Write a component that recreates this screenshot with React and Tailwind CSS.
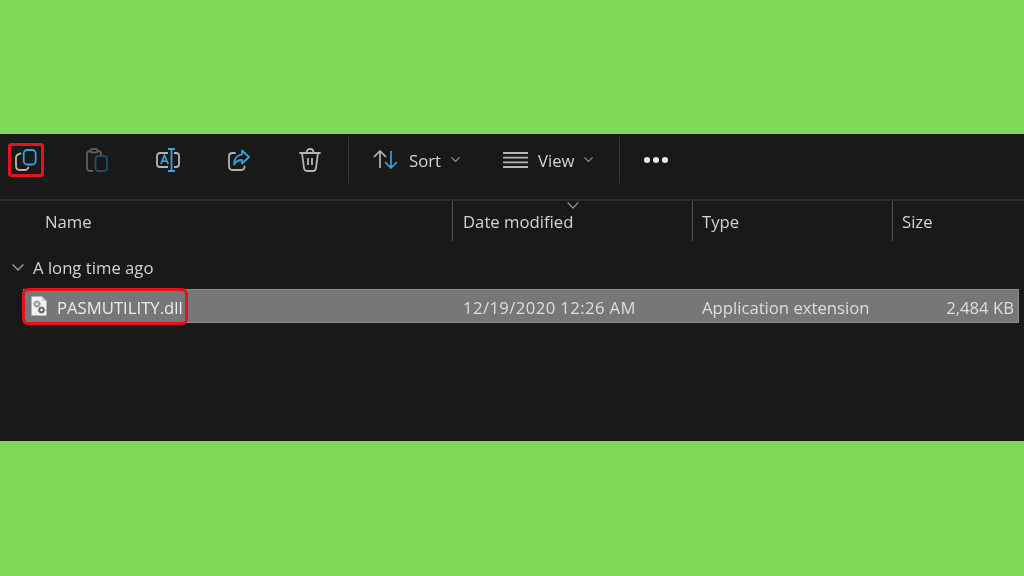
const BLUE = "#3aa0d8";
const GRAY = "#b4b4b4";

function Copy() {
  return (
    <svg width="22" height="22" viewBox="0 0 22 22" fill="none" strokeWidth="1.8">
      <path d="M5.5 4.5 C2.5 5 1 6.5 1 9 V17 C1 19.8 2.5 21 5 21 H9.5 C11.5 21 12.8 20.2 13.4 18.5" stroke={GRAY} strokeLinecap="round" />
      <rect x="8.7" y="1" width="12" height="14.5" rx="3.5" stroke={BLUE} />
    </svg>
  );
}
function Paste() {
  return (
    <svg width="22" height="24" viewBox="0 0 22 24" fill="none" strokeWidth="1.8">
      <path d="M7 23 H4 C2 23 1 21.8 1 20 V6 C1 4.2 2 3 4 3 H12 C14 3 15 4.2 15 6 V7" stroke="#5c5c5c" />
      <rect x="4.5" y="1" width="7" height="3.5" rx="1.7" stroke="#5c5c5c" fill="#191919" />
      <rect x="9.5" y="8" width="11.5" height="15" rx="3" stroke="#1f4d68" />
    </svg>
  );
}
function Rename() {
  return (
    <svg width="24" height="24" viewBox="0 0 24 24" fill="none" strokeWidth="1.8">
      <path d="M12 5 H4 C2.2 5 1 6.2 1 8 V16 C1 17.8 2.2 19 4 19 H12" stroke={GRAY} />
      <path d="M18 5 H20 C21.8 5 23 6.2 23 8 V16 C23 17.8 21.8 19 20 19 H18" stroke={GRAY} />
      <path d="M12 1 H19 M15.5 1 V23 M12 23 H19" stroke={BLUE} />
      <path d="M4.8 16 L8.5 7.5 L12.2 16 M6 13.2 H11" stroke={BLUE} />
    </svg>
  );
}
function Share() {
  return (
    <svg width="22" height="22" viewBox="0 0 22 22" fill="none" strokeWidth="1.8">
      <path d="M7 4 H4.5 C2.3 4 1 5.3 1 7.5 V17 C1 19.7 2.4 21 4.8 21 H13 C15.3 21 16.5 19.7 16.5 17.5" stroke={GRAY} strokeLinecap="round" />
      <path d="M14 1.5 L21 8 L14 14.5 V11 C10.5 11 8 12.2 6 15.5 C6 10 9 6 14 5.3 Z" stroke={BLUE} strokeLinejoin="round" />
    </svg>
  );
}
function Trash() {
  return (
    <svg width="22" height="24" viewBox="0 0 22 24" fill="none" strokeWidth="1.8" stroke={GRAY}>
      <path d="M1 5 H21" strokeLinecap="round" />
      <path d="M7.5 5 C7.5 2.5 9 1 11 1 C13 1 14.5 2.5 14.5 5" />
      <path d="M3 5 L5 20 C5.3 22 6.5 23 8 23 H14 C15.5 23 16.7 22 17 20 L19 5" />
      <path d="M9 10 V17 M13 10 V17" />
    </svg>
  );
}
function SortIcon() {
  return (
    <svg width="25" height="19" viewBox="0 0 25 19" fill="none" strokeWidth="1.7">
      <path d="M1 7 L7 1 L13 7 M7 1 V18" stroke={GRAY} />
      <path d="M12 12 L18 18 L24 12 M18 1 V18" stroke={BLUE} />
    </svg>
  );
}
function ViewIcon() {
  return (
    <svg width="25" height="16" viewBox="0 0 25 16" fill="none" strokeWidth="1.8" stroke={GRAY}>
      <path d="M0 1 H25 M0 5.7 H25 M0 10.3 H25 M0 15 H25" />
    </svg>
  );
}
function Chevron({ size = 9, color = "#9a9a9a" }) {
  return (
    <svg width={size} height={size * 0.6} viewBox="0 0 10 6" fill="none" stroke={color} strokeWidth="1.2">
      <path d="M0.5 0.5 L5 5 L9.5 0.5" />
    </svg>
  );
}
function DllIcon() {
  return (
    <svg width="16" height="20" viewBox="0 0 16 20">
      <path d="M0.5 0.5 H11 L15.5 5 V19.5 H0.5 Z" fill="#f2f2f2" />
      <path d="M11 0.5 V5 H15.5" fill="#c9c9c9" />
      <circle cx="6" cy="8" r="2.2" fill="none" stroke="#9a9a9a" strokeWidth="1.8" />
      <circle cx="6" cy="8" r="3.3" fill="none" stroke="#9a9a9a" strokeWidth="1" strokeDasharray="1.2 1.2" />
      <circle cx="10.5" cy="14" r="2.2" fill="none" stroke="#666666" strokeWidth="1.8" />
      <circle cx="10.5" cy="14" r="3.3" fill="none" stroke="#666666" strokeWidth="1" strokeDasharray="1.2 1.2" />
    </svg>
  );
}

function Tool({ w, children }) {
  return <div className="flex items-center justify-center h-full" style={{ width: w }}>{children}</div>;
}
function HeaderCell({ w, pad, children }) {
  return (
    <div className="h-full flex items-center pt-[2px] border-l border-[#555555]" style={{ width: w, paddingLeft: pad }}>
      {children}
    </div>
  );
}

export default function App() {
  return (
    <div className="w-[1024px] h-[576px] bg-[#7ed957] flex flex-col justify-center overflow-hidden" style={{ fontFamily: '"Open Sans","Noto Sans",sans-serif' }}>
      <div className="h-[307px] mt-[-2px] bg-[#191919] flex flex-col text-[#d4d4d4] text-[16.7px] blur-[0.35px]">
        <div className="relative h-[67px] shrink-0 flex items-start border-b-2 border-[#2d2d2d]">
          <div className="h-[52px] flex items-center">
            <Tool w={52}><Copy /></Tool>
            <div className="ml-[9px] flex items-center h-full">
              <Tool w={71}><Paste /></Tool>
              <Tool w={71}><Rename /></Tool>
              <Tool w={71}><Share /></Tool>
              <Tool w={71}><Trash /></Tool>
            </div>
            <div className="ml-[3px] w-px h-[46px] bg-[#333333]" />
            <div className="ml-[24px] flex items-center"><SortIcon /></div>
            <span className="ml-[11px] pt-[2px]">Sort</span>
            <div className="ml-[10px]"><Chevron /></div>
            <div className="ml-[43px]"><ViewIcon /></div>
            <span className="ml-[10px] pt-[2px]">View</span>
            <div className="ml-[10px]"><Chevron /></div>
            <div className="ml-[26px] w-px h-[46px] bg-[#333333]" />
            <div className="ml-[24px] flex gap-[3px]">
              <div className="w-[6px] h-[6px] rounded-full bg-[#eeeeee]" />
              <div className="w-[6px] h-[6px] rounded-full bg-[#eeeeee]" />
              <div className="w-[6px] h-[6px] rounded-full bg-[#eeeeee]" />
            </div>
          </div>
          <div className="absolute left-[8px] top-[9px] w-[36px] h-[34px] border-[3px] border-[#e3131e] rounded-[3px]" />
        </div>
        <div className="relative h-[40px] shrink-0 flex items-center">
          <div className="w-[452px] pl-[45px] pt-[2px]">Name</div>
          <HeaderCell w={240} pad={10}>Date modified</HeaderCell>
          <HeaderCell w={200} pad={9}>Type</HeaderCell>
          <HeaderCell w={132} pad={9}>Size</HeaderCell>
          <div className="absolute left-[567px] top-[1px]"><Chevron size={12} color="#8a8a8a" /></div>
        </div>
        <div className="h-[48px] shrink-0 flex items-center pl-[12px] gap-[9px] pt-[6px]">
          <Chevron size={12} color="#9a9a9a" />
          <span>A long time ago</span>
        </div>
        <div className="relative ml-[23px] mr-[5px] h-[34px] shrink-0 flex items-center bg-[#777777] border border-[#8c8c8c] text-[#ececec]">
          <div className="w-[33px] pl-[7px] flex items-center"><DllIcon /></div>
          <div className="w-[406px] pt-[4px]">PASMUTILITY.dll</div>
          <div className="w-[239px] pt-[4px] text-[#dddddd] tracking-[0.4px]">12/19/2020 12:26 AM</div>
          <div className="pt-[4px] text-[#dddddd]">Application extension</div>
          <div className="ml-auto pr-[4px] pt-[4px] text-[#dddddd]">2,484 KB</div>
          <div className="absolute left-[-2px] top-[-2px] w-[166px] h-[37px] border-[3px] border-[#e3131e] rounded-[6px]" />
        </div>
      </div>
    </div>
  );
}
